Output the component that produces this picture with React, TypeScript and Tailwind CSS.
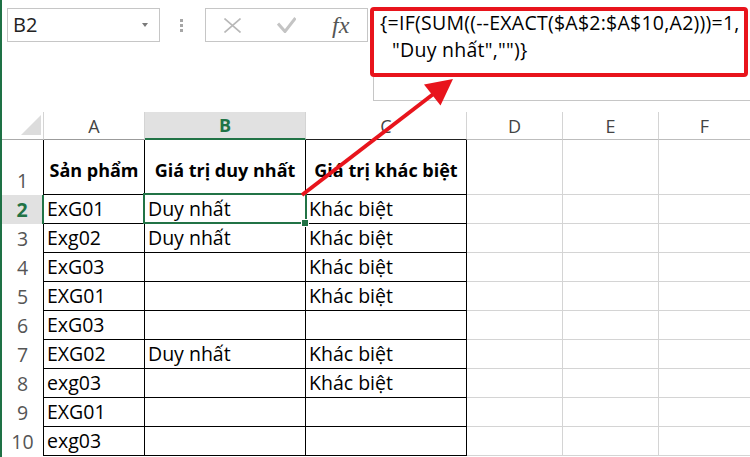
import React from "react";

const rows: string[][] = [
  ["1", "Sản phẩm", "Giá trị duy nhất", "Giá trị khác biệt"],
  ["2", "ExG01", "Duy nhất", "Khác biệt"],
  ["3", "Exg02", "Duy nhất", "Khác biệt"],
  ["4", "ExG03", "", "Khác biệt"],
  ["5", "EXG01", "", "Khác biệt"],
  ["6", "ExG03", "", ""],
  ["7", "EXG02", "Duy nhất", "Khác biệt"],
  ["8", "exg03", "", "Khác biệt"],
  ["9", "EXG01", "", ""],
  ["10", "exg03", "", ""],
];

function TopBar() {
  return (
    <div className="flex h-[112px] items-start pt-[7px]">
      {/* name box */}
      <div className="ml-[5px] mt-[1px] flex h-[34px] w-[153px] items-center justify-between border border-[#c6c6c6] pl-[5px] pr-[11px]">
        <span className="text-[20px] leading-none text-[#222]">B2</span>
        <svg width="6" height="4" viewBox="0 0 6 4">
          <path d="M0 0h6L3 4z" fill="#7a7a7a" />
        </svg>
      </div>

      <div className="ml-[20px] mt-[1px] flex h-[34px] flex-col justify-center gap-[2px]">
        <div className="h-[3px] w-[3px] bg-[#a6a6a6]" />
        <div className="h-[3px] w-[3px] bg-[#a6a6a6]" />
        <div className="h-[3px] w-[3px] bg-[#a6a6a6]" />
      </div>

      {/* cancel / enter / fx */}
      <div className="ml-[22px] mt-[1px] flex h-[34px] w-[163px] items-center gap-[36px] border border-[#c6c6c6] pl-[18px]">
        <svg width="17" height="15" viewBox="0 0 17 15">
          <path d="M0.5 0.5L16.5 14.5M16.5 0.5L0.5 14.5" stroke="#b8b8b8" strokeWidth="1.6" fill="none" />
        </svg>
        <svg width="19" height="16" viewBox="0 0 19 16">
          <path d="M1 6.5L8 14.5L18.5 1" stroke="#c4c4c4" strokeWidth="3" fill="none" />
        </svg>
        <span className="font-['Liberation_Serif',serif] text-[24px] italic leading-none text-[#555]">fx</span>
      </div>

      {/* formula bar */}
      <div className="ml-[2px] flex flex-col">
        <div className="h-[70px] w-[378px] rounded-[4px] border-4 border-[#e8141c] pl-[6px] text-[19.5px] leading-[27px] tracking-[0.25px]">
          <div className="-mt-[2px] whitespace-pre">{"{=IF(SUM((--EXACT($A$2:$A$10,A2)))=1,"}</div>
          <div className="whitespace-pre pl-[12px]">{'"Duy nhất","")}'}</div>
        </div>
        <div className="ml-[3px] h-[24px] w-[377px] border-b border-l border-[#c6c6c6]" />
      </div>
    </div>
  );
}

function HeaderRow() {
  const plain = "flex items-center justify-center text-[18px] leading-[26px] text-[#444] border-r border-r-[#d4d4d4] border-b";
  return (
    <>
      <div className="flex items-end justify-end border-b border-r border-b-[#ababab] border-r-[#d4d4d4] pb-[4px] pr-[2px]">
        <svg width="20" height="20" viewBox="0 0 20 20">
          <polygon points="20,0 20,20 0,20" fill="#dcdcdc" />
        </svg>
      </div>
      <div className={`${plain} border-b-[#9b9b9b]`}>A</div>
      <div className="flex items-center justify-center border-b-2 border-r border-b-[#217346] border-r-[#d4d4d4] bg-[#e1e1e1] text-[18px] font-bold leading-[26px] text-[#217346]">
        B
      </div>
      <div className={`${plain} border-b-[#222]`}>C</div>
      <div className={`${plain} border-b-[#bdbdbd]`}>D</div>
      <div className={`${plain} border-b-[#bdbdbd]`}>E</div>
      <div className={`${plain} border-b-[#bdbdbd]`}>F</div>
    </>
  );
}

function DataRow({ cells }: { cells: string[] }) {
  const [n, a, b, c] = cells;
  const isHead = n === "1";
  const active = n === "2";
  const rowHead = active
    ? "flex items-end justify-center pb-[1px] text-[19.5px] leading-[26px] bg-[#e1e1e1] border-r-2 border-[#217346] font-bold text-[#217346]"
    : "flex items-end justify-center pb-[1px] text-[19.5px] leading-[26px] border-r border-black text-[#555]";
  const cell = isHead
    ? "flex items-end justify-center whitespace-nowrap pb-[11px] text-[18px] font-bold leading-[26px] border-r border-b border-black"
    : "flex items-end whitespace-nowrap pb-[1px] pl-[3px] text-[19.5px] leading-[26px] border-r border-b border-black";
  const grid = "border-r border-b border-[#d4d4d4]";
  return (
    <>
      <div className={rowHead}>{n}</div>
      <div className={cell}>{a}</div>
      <div className={`relative ${cell}`}>
        {b}
        {active && (
          <>
            <div className="absolute -left-[2px] -top-[2px] z-10 h-[31px] w-[164px] border-2 border-[#217346]" />
            <div className="absolute left-[156px] top-[24px] z-10 h-[8px] w-[8px] border border-white bg-[#217346]" />
          </>
        )}
      </div>
      <div className={cell}>{c}</div>
      <div className={grid} />
      <div className={grid} />
      <div className={grid} />
    </>
  );
}

function Arrow() {
  return (
    <svg
      className="pointer-events-none absolute left-0 top-0 z-20"
      width="750"
      height="457"
      viewBox="0 0 750 457"
    >
      <line x1="302" y1="195" x2="434" y2="93.5" stroke="#e8141c" strokeWidth="4" />
      <polygon points="453,79 440.5,105.5 424,84.5" fill="#e8141c" />
    </svg>
  );
}

export default function App() {
  return (
    <div className="relative flex h-[457px] w-[750px] overflow-hidden bg-white font-['Open_Sans',sans-serif] text-black">
      <div className="w-[2px] shrink-0 bg-[#1e7145]" />
      <div className="flex w-[748px] flex-col">
        <TopBar />
        <div className="grid grid-cols-[42px_101px_161px_161px_96px_96px_92px] grid-rows-[28px_55px_repeat(9,29px)]">
          <HeaderRow />
          {rows.map((r) => (
            <DataRow key={r[0]} cells={r} />
          ))}
        </div>
      </div>
      <Arrow />
    </div>
  );
}
